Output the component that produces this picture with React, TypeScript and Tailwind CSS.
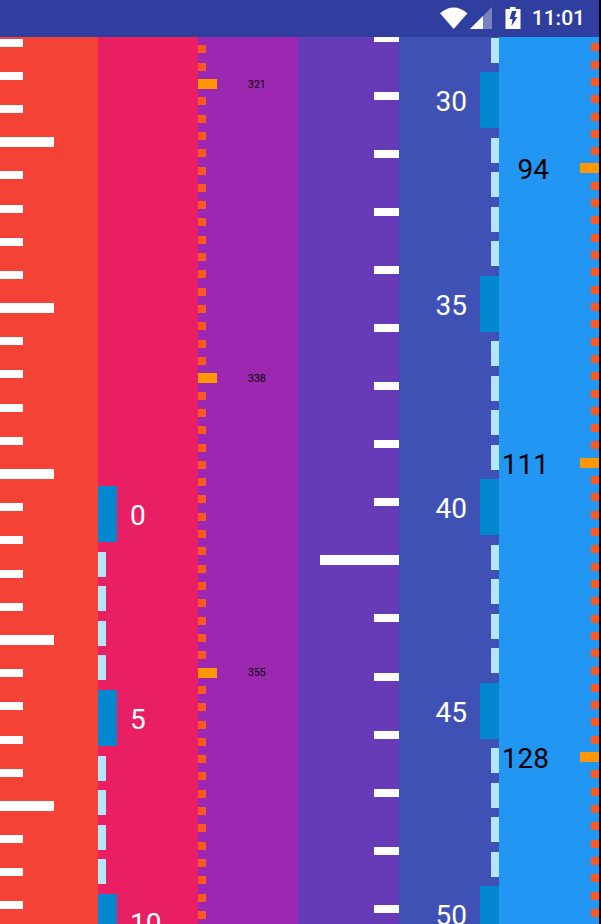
const FONT = "font-['Roboto',sans-serif]";

function range(n: number) {
  return Array.from({ length: n }, (_, i) => i);
}

function StatusBar() {
  return (
    <div className="flex h-[37px] items-center justify-end bg-[#303F9F] pr-[14px] text-white">
      <svg width="28" height="22" viewBox="0 0 28 22" className="mb-[2px] mr-[2px]">
        <path d="M0 6.2Q13.5 -5 27.5 6.2L13.7 22Z" fill="#fff" />
      </svg>
      <svg width="23" height="22" viewBox="0 0 23 22" className="mb-[2px] mr-[12px]">
        <path d="M0 22L22 0V22Z" fill="#fff" fillOpacity="0.35" />
        <path d="M0 22L13 9V22Z" fill="#fff" />
      </svg>
      <svg width="16" height="22" viewBox="0 0 16 22" className="mb-[2px] mr-[11px]">
        <path d="M5 0H10.5V2H15.5V22H0.5V2H5Z" fill="#fff" />
        <path d="M7 4H11.5L9.5 10H12.5L6.5 19L7.5 12H4.5Z" fill="#303F9F" />
      </svg>
      <span className={`${FONT} text-[21px] leading-none font-medium`}>11:01</span>
    </div>
  );
}

function OneColumn() {
  return (
    <div className="w-[98px] overflow-hidden bg-[#F44336]">
      <div className="-mt-[11px]">
        {range(28).map((i) => (
          <div key={i} className="flex h-[33.2px] items-center">
            {i % 5 === 3 ? <div className="h-[10px] w-[54px] bg-white" /> : <div className="h-[8px] w-[23px] bg-white" />}
          </div>
        ))}
      </div>
    </div>
  );
}

function LightBar({ right }: { right?: boolean }) {
  return (
    <div className={`flex h-[25px] ${right ? "mb-[9.5px] justify-end" : "mb-[9.6px]"}`}>
      <div className="h-full w-[8px] bg-[#B3E5FC]" />
    </div>
  );
}

function Major({ label, right }: { label: number; right?: boolean }) {
  return (
    <div className={`flex h-[56px] items-center ${right ? "mb-[9.5px] justify-end" : "mb-[9.6px]"}`}>
      {right ? (
        <>
          <span className={`${FONT} mr-[13px] pt-[4px] text-[28px] leading-none text-white`}>{label}</span>
          <div className="h-full w-[19px] bg-[#0288D1]" />
        </>
      ) : (
        <>
          <div className="h-full w-[19px] bg-[#0288D1]" />
          <span className={`${FONT} ml-[13px] pt-[4px] text-[28px] leading-none text-white`}>{label}</span>
        </>
      )}
    </div>
  );
}

function TwoColumn() {
  return (
    <div className="w-[100px] overflow-hidden bg-[#E91E63] pt-[449px]">
      {[0, 5, 10].map((n, idx) => (
        <div key={n}>
          <Major label={n} />
          {idx < 2 && range(4).map((i) => <LightBar key={i} />)}
        </div>
      ))}
    </div>
  );
}

function ThreeColumn() {
  return (
    <div className="w-[100px] overflow-hidden bg-[#9C27B0] pt-[3.7px]">
      {range(51).map((i) => {
        const major = i % 17 === 2;
        return (
          <div key={i} className="flex h-[17.32px] items-center">
            {major ? (
              <>
                <div className="h-[10px] w-[19px] bg-[#FF9800]" />
                <span className={`${FONT} ml-[31px] pt-[2px] text-[10.5px] leading-none text-black`}>{321 + (i - 2)}</span>
              </>
            ) : (
              <div className="h-[8px] w-[8px] bg-[#FF5722]" />
            )}
          </div>
        );
      })}
    </div>
  );
}

function FourColumn() {
  return (
    <div className="w-[101px] overflow-hidden bg-[#673AB7]">
      <div className="-mt-[28px]">
        {range(17).map((i) => (
          <div key={i} className="flex h-[58.05px] items-center justify-end">
            {i === 9 ? <div className="h-[10px] w-[79px] bg-white" /> : <div className="h-[8px] w-[25px] bg-white" />}
          </div>
        ))}
      </div>
    </div>
  );
}

function FiveColumn() {
  return (
    <div className="w-[100px] overflow-hidden bg-[#3F51B5] pt-[0.5px]">
      <LightBar right />
      {[30, 35, 40, 45, 50].map((n, idx) => (
        <div key={n}>
          <Major label={n} right />
          {idx < 4 && range(4).map((i) => <LightBar key={i} right />)}
        </div>
      ))}
    </div>
  );
}

function SixColumn() {
  return (
    <div className="w-[100px] overflow-hidden bg-[#2196F3] pt-[1.6px]">
      {range(52).map((i) => {
        const major = i % 17 === 7;
        return (
          <div key={i} className="flex h-[17.32px] items-center justify-end">
            {major ? (
              <>
                <span className={`${FONT} mr-[31px] pt-[4px] text-[28px] leading-none text-black`}>{94 + (i - 7)}</span>
                <div className="h-[10px] w-[19px] bg-[#FF9800]" />
              </>
            ) : (
              <div className="h-[8px] w-[8px] bg-[#FF5722]" />
            )}
          </div>
        );
      })}
    </div>
  );
}

export default function App() {
  return (
    <div className="h-[924px] w-[601px] overflow-hidden bg-black">
      <div className="flex h-full w-[599px] flex-col">
        <StatusBar />
        <div className="flex min-h-0 flex-1">
          <OneColumn />
          <TwoColumn />
          <ThreeColumn />
          <FourColumn />
          <FiveColumn />
          <SixColumn />
        </div>
      </div>
    </div>
  );
}
